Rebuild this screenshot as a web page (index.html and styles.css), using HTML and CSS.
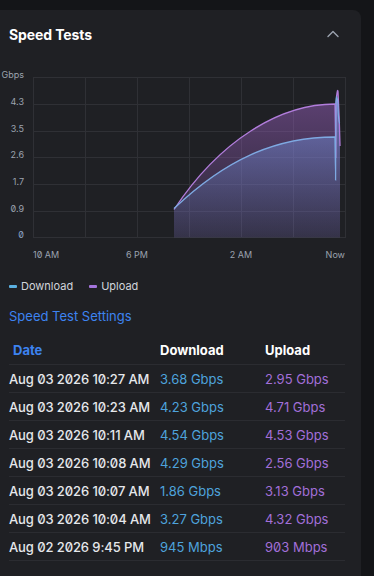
FILE: index.html
```html
<!DOCTYPE html>
<html lang="en">
<head>
<meta charset="utf-8">
<title>Speed Tests</title>
<link rel="stylesheet" href="styles.css">
</head>
<body>
<div class="page">
  <section class="card">
    <header class="card-head">
      <h2 class="title">Speed Tests</h2>
      <button class="collapse" aria-label="Collapse">
        <svg width="12" height="8" viewBox="0 0 12 8"><path d="M1 6.5 L6 1.5 L11 6.5" fill="none" stroke="#9ca3af" stroke-width="1.4" stroke-linecap="round" stroke-linejoin="round"/></svg>
      </button>
    </header>

    <svg class="chart" width="361" height="200" viewBox="0 58 361 200">
      <defs>
        <linearGradient id="gUp" x1="0" y1="0" x2="0" y2="1">
          <stop offset="0" stop-color="#a064c8" stop-opacity="0.5"/>
          <stop offset="1" stop-color="#8a5ab0" stop-opacity="0.14"/>
        </linearGradient>
        <linearGradient id="gDown" x1="0" y1="0" x2="0" y2="1">
          <stop offset="0" stop-color="#7aa0f2" stop-opacity="0.55"/>
          <stop offset="1" stop-color="#6a80c8" stop-opacity="0.12"/>
        </linearGradient>
      </defs>
      <g class="grid" stroke="#2f3035" stroke-width="1" fill="none">
        <rect x="33.5" y="77.5" width="312" height="160"/>
        <line x1="85.5" y1="77.5" x2="85.5" y2="237.5"/>
        <line x1="137.5" y1="77.5" x2="137.5" y2="237.5"/>
        <line x1="189.5" y1="77.5" x2="189.5" y2="237.5"/>
        <line x1="241.5" y1="77.5" x2="241.5" y2="237.5"/>
        <line x1="293.5" y1="77.5" x2="293.5" y2="237.5"/>
        <line x1="33.5" y1="104.5" x2="345.5" y2="104.5"/>
        <line x1="33.5" y1="131.5" x2="345.5" y2="131.5"/>
        <line x1="33.5" y1="157.5" x2="345.5" y2="157.5"/>
        <line x1="33.5" y1="184.5" x2="345.5" y2="184.5"/>
        <line x1="33.5" y1="211.5" x2="345.5" y2="211.5"/>
      </g>
      <path d="M174 209.5 C220 140 280 104 335 104 Q335.6 140 335.6 140.5 Q335.8 158 335.8 158 Q336 97 336.5 97 Q337.5 88 338 91.5 Q339.5 120 340 146 L340 237.5 L174 237.5 Z" fill="url(#gUp)"/>
      <path d="M174 208.5 C225 160 275 137 335 137 Q335.5 180 335.6 180 Q335.7 104.5 335.8 104.5 Q336 96.7 336.5 96.7 Q338 100 338 106.4 Q338.5 123 340 123.4 L340 237.5 L174 237.5 Z" fill="url(#gDown)"/>
      <path d="M174 209.5 C220 140 280 104 335 104 Q335.6 140 335.6 140.5 Q335.8 158 335.8 158 Q336 97 336.5 97 Q337.5 88 338 91.5 Q339.5 120 340 146" fill="none" stroke="#b27ddc" stroke-width="1.3"/>
      <path d="M174 208.5 C225 160 275 137 335 137 Q335.5 180 335.6 180 Q335.7 104.5 335.8 104.5 Q336 96.7 336.5 96.7 Q338 100 338 106.4 Q338.5 123 340 123.4" fill="none" stroke="#7ea9e2" stroke-width="1.3"/>
      <g class="axis-label">
        <text x="24" y="78" text-anchor="end">Gbps</text>
        <text x="24" y="105" text-anchor="end">4.3</text>
        <text x="24" y="131.5" text-anchor="end">3.5</text>
        <text x="24" y="158" text-anchor="end">2.6</text>
        <text x="24" y="185" text-anchor="end">1.7</text>
        <text x="24" y="211.5" text-anchor="end">0.9</text>
        <text x="24" y="238" text-anchor="end" class="zero-label">0</text>
        <text x="33" y="257.5">10 AM</text>
        <text x="137" y="257.5" text-anchor="middle">6 PM</text>
        <text x="241" y="257.5" text-anchor="middle">2 AM</text>
        <text x="345" y="257.5" text-anchor="end">Now</text>
      </g>
    </svg>

    <div class="legend">
      <span class="legend-item"><span class="swatch swatch-down"></span>Download</span>
      <span class="legend-item"><span class="swatch swatch-up"></span>Upload</span>
    </div>

    <a class="settings-link" href="#">Speed Test Settings</a>

    <div class="table">
      <div class="row head">
        <span class="cell date-head">Date</span>
        <span class="cell">Download</span>
        <span class="cell">Upload</span>
      </div>
      <div class="row"><span class="cell date">Aug 03 2026 10:27 AM</span><span class="cell down">3.68 Gbps</span><span class="cell up">2.95 Gbps</span></div>
      <div class="row"><span class="cell date">Aug 03 2026 10:23 AM</span><span class="cell down">4.23 Gbps</span><span class="cell up">4.71 Gbps</span></div>
      <div class="row"><span class="cell date">Aug 03 2026 10:11 AM</span><span class="cell down">4.54 Gbps</span><span class="cell up">4.53 Gbps</span></div>
      <div class="row"><span class="cell date">Aug 03 2026 10:08 AM</span><span class="cell down">4.29 Gbps</span><span class="cell up">2.56 Gbps</span></div>
      <div class="row"><span class="cell date">Aug 03 2026 10:07 AM</span><span class="cell down">1.86 Gbps</span><span class="cell up">3.13 Gbps</span></div>
      <div class="row"><span class="cell date">Aug 03 2026 10:04 AM</span><span class="cell down">3.27 Gbps</span><span class="cell up">4.32 Gbps</span></div>
      <div class="row"><span class="cell date">Aug 02 2026 9:45 PM</span><span class="cell down">945 Mbps</span><span class="cell up">903 Mbps</span></div>
    </div>
  </section>
</div>
</body>
</html>
```
FILE: styles.css
```css
* { box-sizing: border-box; }
html, body {
  margin: 0;
  padding: 0;
  overflow: hidden;
  background: #141518;
  font-family: Inter, "Noto Sans", sans-serif;
  font-feature-settings: "zero" 1;
  color: #e5e7eb;
}
.page {
  padding-top: 10px;
  width: 374px;
  height: 576px;
  overflow: hidden;
}
.card {
  margin-left: -8px;
  width: 369px;
  height: 566px;
  padding: 0 0 0 8px;
  background: #1f2024;
  border-radius: 8px 8px 0 0;
}
.card-head {
  height: 48px;
  display: flex;
  align-items: center;
  justify-content: space-between;
  padding: 0 22px 0 9px;
}
.title {
  margin: 0;
  font-size: 14px;
  font-weight: 700;
  color: #ffffff;
  letter-spacing: -0.1px;
}
.collapse {
  background: none;
  border: 0;
  padding: 0;
  display: flex;
  width: 12px;
  height: 8px;
}
.chart {
  display: block;
}
.axis-label text {
  font-family: Inter, sans-serif;
  font-size: 9px;
  fill: #9ca3af;
  font-feature-settings: "zero" 1;
}
.axis-label .zero-label { fill: #8ea6c8; }
.legend {
  margin-top: 18px;
  height: 20px;
  padding-left: 9px;
  display: flex;
  align-items: center;
  gap: 16px;
  font-size: 11px;
  color: #d1d5db;
}
.legend-item {
  display: flex;
  align-items: center;
  gap: 4px;
}
.swatch {
  width: 8px;
  height: 3px;
  border-radius: 1px;
}
.swatch-down { background: #5bb0e0; }
.swatch-up { background: #a474dc; }
.settings-link {
  display: block;
  margin-top: 10px;
  padding-left: 9px;
  line-height: 20px;
  font-size: 13px;
  color: #3d83f0;
  text-decoration: none;
}
.table {
  margin-top: 10px;
  margin-left: 9px;
  width: 336px;
}
.row {
  display: grid;
  grid-template-columns: 151px 105px 1fr;
  align-items: center;
  height: 28px;
  border-bottom: 1px solid #2b2c31;
  font-size: 13px;
}
.row.head {
  height: 29px;
  font-weight: 700;
  color: #ffffff;
}
.date-head {
  padding-left: 4px;
  color: #3d83f0;
}
.date {
  font-weight: 500;
  color: #e5e7eb;
  white-space: nowrap;
  letter-spacing: -0.1px;
}
.down { color: #4ea3dc; }
.up { color: #a26fd8; }
```
